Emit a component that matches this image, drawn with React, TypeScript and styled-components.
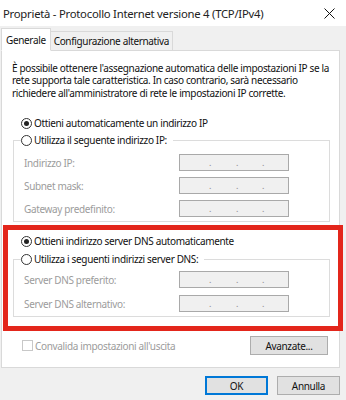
import React from 'react';
import styled, { createGlobalStyle } from 'styled-components';

const GlobalStyle = createGlobalStyle`
  html, body {
    margin: 0;
    padding: 0;
    background: #f0f0f0;
  }
  body {
    font-family: 'Noto Sans', 'Liberation Sans', sans-serif;
    font-size: 10px;
    letter-spacing: -0.35px;
    color: #111;
  }
`;

const Window = styled.div`
  width: 346px;
  height: 400px;
  background: #f0f0f0;
  display: flex;
  flex-direction: column;
  overflow: hidden;
`;

const TitleBar = styled.div`
  height: 26px;
  flex: none;
  background: #fff;
  display: flex;
  align-items: center;
  justify-content: space-between;
  padding: 0 11px 0 3px;
  font-size: 11.3px;
  letter-spacing: -0.25px;
  color: #222;
`;

const Body = styled.div`
  flex: 1;
  display: flex;
  flex-direction: column;
  padding: 4px 6px 0 1px;
`;

const TabStrip = styled.div`
  display: flex;
  align-items: flex-end;
  height: 20px;
  position: relative;
  z-index: 1;
`;

const Tab = styled.div<{ $active?: boolean }>`
  height: ${p => (p.$active ? 21 : 18)}px;
  padding: 0 ${p => (p.$active ? 4 : 3)}px;
  display: flex;
  align-items: center;
  background: ${p => (p.$active ? '#fff' : '#f0f0f0')};
  border: 1px solid #d9d9d9;
  border-bottom: ${p => (p.$active ? '1px solid #fff' : 'none')};
  margin-bottom: ${p => (p.$active ? -1 : 0)}px;
  ${p => (p.$active ? '' : 'border-left: none;')}
`;

const Panel = styled.div`
  height: 318px;
  box-sizing: border-box;
  background: #fff;
  border: 1px solid #d9d9d9;
  padding: 11px 10px 0 10px;
  display: flex;
  flex-direction: column;
`;

const Intro = styled.p`
  margin: 0;
  line-height: 12.4px;
  white-space: nowrap;
`;

const RadioRow = styled.label<{ $top?: number; $left?: number }>`
  display: flex;
  align-items: center;
  gap: 2px;
  height: 14px;
  margin-top: ${p => p.$top ?? 0}px;
  margin-left: ${p => p.$left ?? 0}px;
`;

const RadioDot = styled.span<{ $on?: boolean }>`
  width: 11px;
  height: 11px;
  box-sizing: border-box;
  border: 1px solid #333;
  border-radius: 50%;
  background: #fff;
  display: inline-flex;
  align-items: center;
  justify-content: center;
  flex: none;

  &::after {
    content: '';
    width: 5px;
    height: 5px;
    border-radius: 50%;
    background: ${p => (p.$on ? '#222' : 'transparent')};
  }
`;

const Group = styled.fieldset<{ $top?: number; $left?: number }>`
  margin: ${p => p.$top ?? 0}px 0 0 ${p => p.$left ?? 0}px;
  width: 317px;
  box-sizing: border-box;
  padding: 0 0 4px 10px;
  border: 1px solid #dcdcdc;
  min-width: 0;
`;

const Legend = styled.legend`
  padding: 0 6px 0 0;
  margin-left: -3px;
  background: #fff;
`;

const FieldGrid = styled.div<{ $gap: number; $top: number }>`
  display: grid;
  grid-template-columns: 155px 110px;
  row-gap: ${p => p.$gap}px;
  margin-top: ${p => p.$top}px;
  align-items: center;
`;

const FieldLabel = styled.span`
  color: #9c9c9c;
`;

const IpBox = styled.div`
  height: 17px;
  box-sizing: border-box;
  border: 1px solid #a9a9a9;
  background: #f0f0f0;
  display: grid;
  grid-template-columns: 31px 27px 26px 27px;
  align-items: center;
  color: #8c8c8c;
  font-size: 9px;
  line-height: 1;

  span {
    text-align: right;
  }
`;

const Highlight = styled.div`
  margin: 3px -14px 0 -9px;
  border: 5px solid #e3261b;
  padding: 4px 0 4px 13px;
  height: 106px;
  box-sizing: border-box;
`;

const OptionsRow = styled.div`
  display: flex;
  align-items: center;
  justify-content: space-between;
  margin-top: 5px;
  padding: 0 1px 0 10px;
`;

const CheckRow = styled.label`
  display: flex;
  align-items: center;
  gap: 2px;
  color: #9c9c9c;
`;

const CheckBox = styled.span`
  width: 11px;
  height: 11px;
  box-sizing: border-box;
  border: 1px solid #c8c8c8;
  background: #fff;
  flex: none;
`;

const Button = styled.button<{ $default?: boolean; $w: number }>`
  width: ${p => p.$w}px;
  height: 19px;
  box-sizing: border-box;
  padding: 0;
  font: inherit;
  letter-spacing: inherit;
  color: #111;
  background: #e1e1e1;
  border: 1px solid ${p => (p.$default ? '#0078d7' : '#adadad')};
  box-shadow: ${p => (p.$default ? 'inset 0 0 0 1px #0078d7' : 'none')};
`;

const Footer = styled.div`
  display: flex;
  justify-content: flex-end;
  gap: 9px;
  padding-top: 8px;
`;

const CloseIcon = () => (
  <svg width="11" height="11" viewBox="0 0 11 11">
    <path d="M0.5 0.5L10.5 10.5M10.5 0.5L0.5 10.5" stroke="#111" strokeWidth="1" />
  </svg>
);

const IpField = () => (
  <IpBox>
    <span>.</span>
    <span>.</span>
    <span>.</span>
  </IpBox>
);

const Radio = ({ on, children, top, left }: { on?: boolean; children: React.ReactNode; top?: number; left?: number }) => (
  <RadioRow $top={top} $left={left}>
    <RadioDot $on={on} />
    {children}
  </RadioRow>
);

export default function App() {
  return (
    <Window>
      <GlobalStyle />
      <TitleBar>
        <span>Proprietà - Protocollo Internet versione 4 (TCP/IPv4)</span>
        <CloseIcon />
      </TitleBar>
      <Body>
        <TabStrip>
          <Tab $active>Generale</Tab>
          <Tab>Configurazione alternativa</Tab>
        </TabStrip>
        <Panel>
          <Intro>
            È possibile ottenere l'assegnazione automatica delle impostazioni IP se la
            <br />
            rete supporta tale caratteristica. In caso contrario, sarà necessario
            <br />
            richiedere all'amministratore di rete le impostazioni IP corrette.
          </Intro>
          <Radio on top={17} left={9}>Ottieni automaticamente un indirizzo IP</Radio>
          <Group $top={3} $left={1}>
            <Legend>
              <Radio>Utilizza il seguente indirizzo IP:</Radio>
            </Legend>
            <FieldGrid $gap={6} $top={7}>
              <FieldLabel>Indirizzo IP:</FieldLabel>
              <IpField />
              <FieldLabel>Subnet mask:</FieldLabel>
              <IpField />
              <FieldLabel>Gateway predefinito:</FieldLabel>
              <IpField />
            </FieldGrid>
          </Group>
          <Highlight>
            <Radio on>Ottieni indirizzo server DNS automaticamente</Radio>
            <Group $top={4} $left={-8}>
              <Legend>
                <Radio>Utilizza i seguenti indirizzi server DNS:</Radio>
              </Legend>
              <FieldGrid $gap={7} $top={5}>
                <FieldLabel>Server DNS preferito:</FieldLabel>
                <IpField />
                <FieldLabel>Server DNS alternativo:</FieldLabel>
                <IpField />
              </FieldGrid>
            </Group>
          </Highlight>
          <OptionsRow>
            <CheckRow>
              <CheckBox />
              Convalida impostazioni all'uscita
            </CheckRow>
            <Button $w={78}>Avanzate...</Button>
          </OptionsRow>
        </Panel>
        <Footer>
          <Button $default $w={63}>OK</Button>
          <Button $w={63}>Annulla</Button>
        </Footer>
      </Body>
    </Window>
  );
}
